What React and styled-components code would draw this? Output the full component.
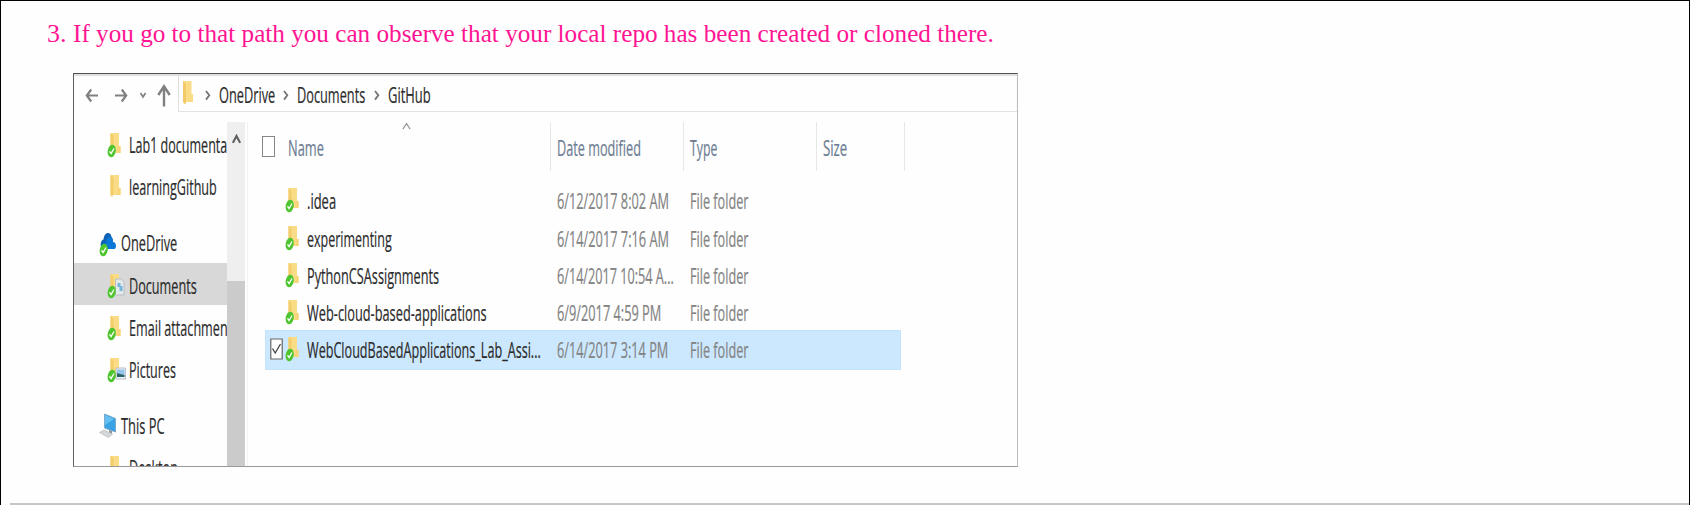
import React, { useLayoutEffect, useRef, useState } from "react";
import styled, { createGlobalStyle } from "styled-components";

const GlobalStyle = createGlobalStyle`
  * { box-sizing: border-box; }
  html, body { margin: 0; background: #fff; overflow: hidden; }
`;

const Page = styled.main`
  width: 1690px;
  height: 505px;
  border: 1px solid #000;
  border-bottom: 0;
  display: flex;
  flex-direction: column;
  background: #fefefe;
`;

const Step = styled.p`
  display: flex;
  margin: 18px 0 0 46px;
  height: 30px;
  color: #ff1493;
  font: 26px/30px "Liberation Serif", serif;
`;
const StepNumber = styled.span`
  width: 25.5px;
`;

const Explorer = styled.section`
  margin: 24px 0 0 72px;
  width: 945px;
  height: 394px;
  border: 1px solid;
  border-color: #505050 #bbb #999 #606060;
  display: flex;
  flex-direction: column;
  overflow: hidden;
  font: 21px/37px "Open Sans", "Noto Sans", sans-serif;
  color: #2b2b2b;
  -webkit-text-stroke: 0.2px;
`;

const Toolbar = styled.header`
  height: 38px;
  flex: none;
  display: flex;
  box-shadow: inset 0 2px 1px #dedede;
`;
const NavButtons = styled.nav`
  width: 104px;
  padding-top: 8px;
`;
const AddressBar = styled.div`
  flex: 1;
  margin-top: 2px;
  border-left: 1px solid #dedede;
  border-bottom: 1px solid #e3e3e3;
  display: flex;
  padding-left: 4px;
  & > svg:first-child { margin: 4px 11px 0 0; }
`;
const Crumb = styled.div`
  display: flex;
  width: ${(p) => p.$w}px;
  line-height: 38px;
  & > svg { margin: 14px 8px 0 0; flex: none; }
`;

const Body = styled.div`
  flex: 1;
  min-height: 0;
  display: flex;
  padding-top: 10px;
`;
const Sidebar = styled.aside`
  width: 153px;
  overflow: hidden;
`;
const TreeItem = styled.div`
  height: 42.2px;
  margin-top: ${(p) => (p.$group ? 14 : 0)}px;
  padding-left: ${(p) => (p.$group ? 25 : 33)}px;
  display: flex;
  align-items: flex-start;
  line-height: 46px;
  background: ${(p) => (p.$active ? "#d8d8d8" : "transparent")};
  & > svg { flex: none; margin: 10px ${(p) => (p.$group ? 3.5 : 0)}px 0 0; }
`;
const ScrollTrack = styled.div`
  width: 18px;
  background: #efefef;
  display: flex;
  flex-direction: column;
  justify-content: space-between;
  align-items: center;
  & > svg { margin-top: 12px; }
`;
const ScrollThumb = styled.div`
  width: 18px;
  height: 185px;
  background: #cbcbcb;
`;
const FileList = styled.div`
  flex: 1;
  margin-left: 2px;
  border-left: 1px solid #f3f3f3;
  padding-left: 14px;
`;
const Columns = styled.div`
  height: 49px;
  display: flex;
  color: #6c7c92;
`;
const ColumnHead = styled.div`
  width: ${(p) => p.$w}px;
  border-right: 1px solid #e7e7e7;
  padding-left: ${(p) => p.$pad ?? 6}px;
  display: flex;
  line-height: 53px;
  & > svg:last-child { margin-left: 78px; }
`;
const CheckBox = styled.span`
  flex: none;
  width: 13px;
  height: 21px;
  margin: 14px 13px 0 0;
  border: 1px solid #868686;
  background: #fff;
`;
const Rows = styled.div`
  padding-top: 11.3px;
`;
const Row = styled.div`
  width: 638px;
  height: 37.3px;
  padding-left: 4px;
`;
const RowFill = styled.div`
  width: 634px;
  height: 37.3px;
  display: flex;
  line-height: 39px;
  background: ${(p) => (p.$selected ? "#cce8ff" : "transparent")};
  box-shadow: ${(p) => (p.$selected ? "0 0 0 1px #c4e3fd" : "none")};
`;
const Marker = styled.div`
  width: 18.5px;
  padding: 7px 0 0 4px;
  line-height: 0;
`;
const FolderCell = styled.div`
  width: 22.5px;
  padding-top: 5px;
  line-height: 0;
`;
const Cell = styled.div`
  width: ${(p) => p.$w}px;
  color: ${(p) => (p.$muted ? "#838383" : "#2b2b2b")};
`;
const BottomRule = styled.hr`
  margin: 36px 0 0 9px;
  border: 0;
  height: 2px;
  flex: none;
  background: #c6c6c6;
`;

const FitBox = styled.span`
  display: block;
  flex: none;
  width: ${(p) => p.$w}px;
  white-space: nowrap;
`;
const FitText = styled.span`
  display: inline-block;
  transform-origin: 0 50%;
`;

// Squeezes a label horizontally so that it takes exactly the given width.
function Fit({ w, children }) {
  const ref = useRef(null);
  const [scale, setScale] = useState(1);
  useLayoutEffect(() => {
    setScale(w / ref.current.offsetWidth);
  }, [w, children]);
  return (
    <FitBox $w={w}>
      <FitText ref={ref} style={{ transform: `scaleX(${scale})` }}>{children}</FitText>
    </FitBox>
  );
}

const FolderShape = () => (
  <>
    <path d="M3.500 1h8.500v13h1.500v7H3.500z" fill="#fbdc86" />
    <path d="M10.500 14h3v7h-3z" fill="#f8d478" />
    <path d="M3.500 1 6.500 3.500V20L5 23l-1.500-2z" fill="#f3cc6b" />
  </>
);
const CheckBadge = () => (
  <>
    <ellipse cx="4.700" cy="19" rx="4" ry="6.400" fill="#4fc52f" transform="rotate(10 4.700 19)" />
    <path d="M2.500 19.300 4.100 21.500 7 16.500" fill="none" stroke="#fff" strokeWidth="1.300" />
  </>
);

function FolderIcon({ synced, extra, w = 22 }) {
  return (
    <svg width={w} height="27" viewBox={`0 0 ${w} 27`}>
      <FolderShape />
      {extra === "doc" && (
        <>
          <path d="M8.500 6h6l2.500 3v13H8.500z" fill="#e3e8eb" stroke="#a9b3b9" strokeWidth=".7" />
          <path d="M10.500 10h3v3h2v5h-3v-4h-2z" fill="#76b6dd" />
        </>
      )}
      {extra === "pic" && (
        <>
          <path d="M9 11h9.500v11H9z" fill="#edf2f6" stroke="#a8b2ba" strokeWidth=".8" />
          <path d="M10 12.500h7.500v7H10z" fill="#92c4ec" />
          <path d="M10 16l3 1 4.500 1v2H10z" fill="#2f6169" />
        </>
      )}
      {synced && <CheckBadge />}
    </svg>
  );
}

const AddressFolder = () => (
  <svg width="11" height="25" viewBox="0 0 11 25">
    <path d="M0 1h8.500v13H10v8H0z" fill="#fbdc86" />
    <path d="M0 1 3 4v19l-1 1.500L0 22z" fill="#f2ca67" />
  </svg>
);

const CloudIcon = () => (
  <svg width="18" height="28" viewBox="0 0 18 28">
    <path d="M2 17C1 13 2.500 10 4.500 9.500 5 5 7 3 9 3c2 0 3 1 3.500 4 1.500 1 1.500 3 1.500 5z" fill="#0d62b5" />
    <path d="M5 19c-1-4 .5-6 2-6 .5-5 2-6 3.500-6 2 0 3.500 2 3.500 5 2 0 3 2 3 4 0 2-1 3-1.500 3z" fill="#0a78d7" />
    <ellipse cx="4.700" cy="20" rx="4" ry="6.400" fill="#4fc52f" transform="rotate(10 4.700 20)" />
    <path d="M2.500 20.300 4.100 22.500 7 17.500" fill="none" stroke="#fff" strokeWidth="1.300" />
  </svg>
);

const ComputerIcon = () => (
  <svg width="18" height="28" viewBox="0 0 18 28">
    <path d="M5.500 1 16.500 5.500V19L5.500 15z" fill="#39a3e6" stroke="#6d9bb8" strokeWidth=".7" />
    <path d="M6 2l9 4L6 12z" fill="#65bff2" />
    <path d="M10 17l3 1v3l-3-1z" fill="#8e989e" />
    <path d="M0.500 19.500 5 17l8.500 4L9.500 24.500z" fill="#d4d8db" stroke="#aab1b6" strokeWidth=".6" />
  </svg>
);

const Chevron = () => (
  <svg width="6" height="11" viewBox="0 0 6 11">
    <path d="M1 1 4.300 5.300 1 9.600" fill="none" stroke="#747474" strokeWidth="1.800" />
  </svg>
);

const NavArrows = () => (
  <svg width="104" height="28" viewBox="0 0 104 28" fill="none" stroke="#808080" strokeWidth="2.200">
    <path d="M24 13.500H13M17.200 7.500 12.800 13.500l4.400 6" />
    <path d="M41 13.500h11M47.800 7.500l4.400 6-4.400 6" />
    <path d="M66.500 11 69 15l2.500-4" strokeWidth="1.700" />
    <path d="M90 24.500V4.500M84.300 13 90 4.300 95.700 13" strokeWidth="2.400" />
  </svg>
);

const CaretUp = ({ w, h, stroke, sw }) => (
  <svg width={w} height={h} viewBox="0 0 8 9" preserveAspectRatio="none">
    <path d="M.8 8 4 1.800 7.200 8" fill="none" stroke={stroke} strokeWidth={sw} />
  </svg>
);

const CheckedBox = () => (
  <svg width="13" height="22" viewBox="0 0 13 22">
    <path d="M.8 1h11.400v20H.8z" fill="#fff" stroke="#666" strokeWidth="1.200" />
    <path d="M2.500 10.500 5.200 15 10.500 6" fill="none" stroke="#444" strokeWidth="1.300" />
  </svg>
);

const crumbs = [
  { label: "OneDrive", w: 56, step: 78 },
  { label: "Documents", w: 68, step: 91 },
  { label: "GitHub", w: 42.5, step: 60 },
];

const tree = [
  { label: "Lab1 documenta", w: 98.5, icon: <FolderIcon synced /> },
  { label: "learningGithub", w: 87.5, icon: <FolderIcon /> },
  { label: "OneDrive", w: 56, icon: <CloudIcon />, group: true },
  { label: "Documents", w: 67.5, icon: <FolderIcon synced extra="doc" />, active: true },
  { label: "Email attachmen", w: 98.5, icon: <FolderIcon synced /> },
  { label: "Pictures", w: 47, icon: <FolderIcon synced extra="pic" /> },
  { label: "This PC", w: 43.5, icon: <ComputerIcon />, group: true },
  { label: "Desktop", w: 49, icon: <FolderIcon /> },
];

const files = [
  { name: ".idea", nw: 29, date: "6/12/2017 8:02 AM", dw: 112 },
  { name: "experimenting", nw: 85, date: "6/14/2017 7:16 AM", dw: 112 },
  { name: "PythonCSAssignments", nw: 132, date: "6/14/2017 10:54 A...", dw: 117 },
  { name: "Web-cloud-based-applications", nw: 179.5, date: "6/9/2017 4:59 PM", dw: 104 },
  { name: "WebCloudBasedApplications_Lab_Assi...", nw: 233.5, date: "6/14/2017 3:14 PM", dw: 111, selected: true },
];

export default function App() {
  return (
    <Page>
      <GlobalStyle />
      <Step>
        <StepNumber>3.</StepNumber>
        <Fit w={921}>If you go to that path you can observe that your local repo has been created or cloned there.</Fit>
      </Step>
      <Explorer>
        <Toolbar>
          <NavButtons><NavArrows /></NavButtons>
          <AddressBar>
            <AddressFolder />
            {crumbs.map((c) => (
              <Crumb key={c.label} $w={c.step}>
                <Chevron />
                <Fit w={c.w}>{c.label}</Fit>
              </Crumb>
            ))}
          </AddressBar>
        </Toolbar>
        <Body>
          <Sidebar>
            {tree.map((t, i) => (
              <TreeItem key={i} $group={t.group} $active={t.active}>
                {t.icon}
                <Fit w={t.w}>{t.label}</Fit>
              </TreeItem>
            ))}
          </Sidebar>
          <ScrollTrack>
            <CaretUp w={9} h={10} stroke="#606060" sw={1.9} />
            <ScrollThumb />
          </ScrollTrack>
          <FileList>
            <Columns>
              <ColumnHead $w={289} $pad={0}>
                <CheckBox />
                <Fit w={36}>Name</Fit>
                <CaretUp w={9} h={8} stroke="#8a8a8a" sw={1.1} />
              </ColumnHead>
              <ColumnHead $w={133}><Fit w={84}>Date modified</Fit></ColumnHead>
              <ColumnHead $w={133}><Fit w={27.5}>Type</Fit></ColumnHead>
              <ColumnHead $w={88}><Fit w={24}>Size</Fit></ColumnHead>
            </Columns>
            <Rows>
              {files.map((f) => (
                <Row key={f.name}>
                  <RowFill $selected={f.selected}>
                    <Marker>{f.selected && <CheckedBox />}</Marker>
                    <FolderCell><FolderIcon synced /></FolderCell>
                    <Cell $w={250}><Fit w={f.nw}>{f.name}</Fit></Cell>
                    <Cell $w={133} $muted><Fit w={f.dw}>{f.date}</Fit></Cell>
                    <Cell $w={80} $muted><Fit w={58.5}>File folder</Fit></Cell>
                  </RowFill>
                </Row>
              ))}
            </Rows>
          </FileList>
        </Body>
      </Explorer>
      <BottomRule />
    </Page>
  );
}
